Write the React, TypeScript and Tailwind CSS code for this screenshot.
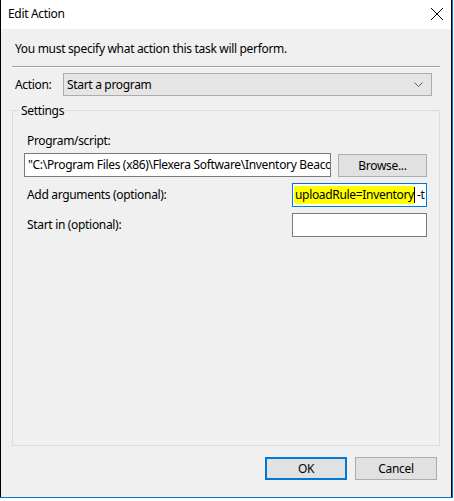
import React from "react";

const font = { fontFamily: '"Noto Sans", "Open Sans", sans-serif' };

export default function App() {
  return (
    <div className="w-[454px] h-[501px] bg-white text-[12px] tracking-[-0.32px] text-black" style={font}>
      <div className="w-[453px] h-[498px] border-r border-b border-[#0078d7] flex flex-col">
        <div className="flex-1 flex flex-col border-l border-r border-black">
          {/* Title bar */}
          <div className="h-[29px] bg-white flex items-center justify-between pl-[7px] pr-[6px]">
            <span className="text-[12px] leading-[16px] mt-[-1px]">Edit Action</span>
            <svg width="14" height="14" viewBox="0 0 14 14" className="mr-[1px] mt-[-1px]">
              <path d="M1 1 L13 13 M13 1 L1 13" stroke="#000" strokeWidth="1" fill="none" />
            </svg>
          </div>
          {/* Body */}
          <div className="flex-1 bg-[#f0f0f0] flex flex-col pl-[11px] pr-[11px]">
            <div className="pt-[12px] pl-[3px] leading-[16px] h-[28px]">
              You must specify what action this task will perform.
            </div>
            <div className="mt-[9px] h-[2px] border-t border-[#a0a0a0] border-b border-b-white" />
            <div className="mt-[5px] flex items-center h-[23px]">
              <span className="w-[51px] pl-[3px] leading-[16px]">Action:</span>
              <div className="w-[369px] h-[23px] bg-[#e5e5e5] border border-[#acacac] flex items-center justify-between pl-[3px] pr-[8px]">
                <span className="leading-[16px]">Start a program</span>
                <svg width="9" height="6" viewBox="0 0 9 6">
                  <path d="M0.5 0.5 L4.5 4.5 L8.5 0.5" stroke="#606060" strokeWidth="1" fill="none" />
                </svg>
              </div>
            </div>
            {/* Settings group */}
            <div className="relative mt-[14px] w-[428px] h-[336px] border border-[#dcdcdc] flex flex-col pl-[11px]">
              <span className="absolute left-[7px] top-[-8px] px-[1px] bg-[#f0f0f0] leading-[16px]">Settings</span>
              <div className="mt-[22px] pl-[3px] leading-[16px]">Program/script:</div>
              <div className="mt-[4px] flex items-start">
                <div className="w-[307px] h-[24px] bg-white border border-[#7a7a7a] overflow-hidden whitespace-nowrap pl-[3px] leading-[22px]">
                  "C:\Program Files (x86)\Flexera Software\Inventory Beaco
                </div>
                <div className="ml-[7px] mt-[1px] w-[89px] h-[23px] bg-[#e1e1e1] border border-[#adadad] flex items-center justify-center leading-[16px]">
                  Browse...
                </div>
              </div>
              <div className="mt-[6px] flex items-center h-[24px]">
                <span className="w-[268px] pl-[3px] leading-[16px]">Add arguments (optional):</span>
                <div className="w-[135px] h-[24px] bg-white border border-[#0078d7] overflow-hidden whitespace-nowrap pl-[1px] flex items-center">
                  <span className="bg-[#ffff00] rounded-[3px] px-[1px] leading-[18px] shrink-0">uploadRule=Inventory</span>
                  <span className="w-[1px] h-[16px] bg-black ml-[-1px] shrink-0" />
                  <span className="ml-[2px] leading-[16px] shrink-0">-t</span>
                </div>
              </div>
              <div className="mt-[6px] flex items-center h-[24px]">
                <span className="w-[268px] pl-[3px] leading-[16px]">Start in (optional):</span>
                <div className="w-[135px] h-[24px] bg-white border border-[#7a7a7a]" />
              </div>
            </div>
            <div className="mt-[11px] flex justify-end pr-[3px] gap-[8px]">
              <div className="w-[82px] h-[23px] bg-[#e1e1e1] border-2 border-[#0078d7] flex items-center justify-center leading-[16px]">
                OK
              </div>
              <div className="w-[82px] h-[23px] bg-[#e1e1e1] border border-[#adadad] flex items-center justify-center leading-[16px]">
                Cancel
              </div>
            </div>
          </div>
        </div>
      </div>
    </div>
  );
}
